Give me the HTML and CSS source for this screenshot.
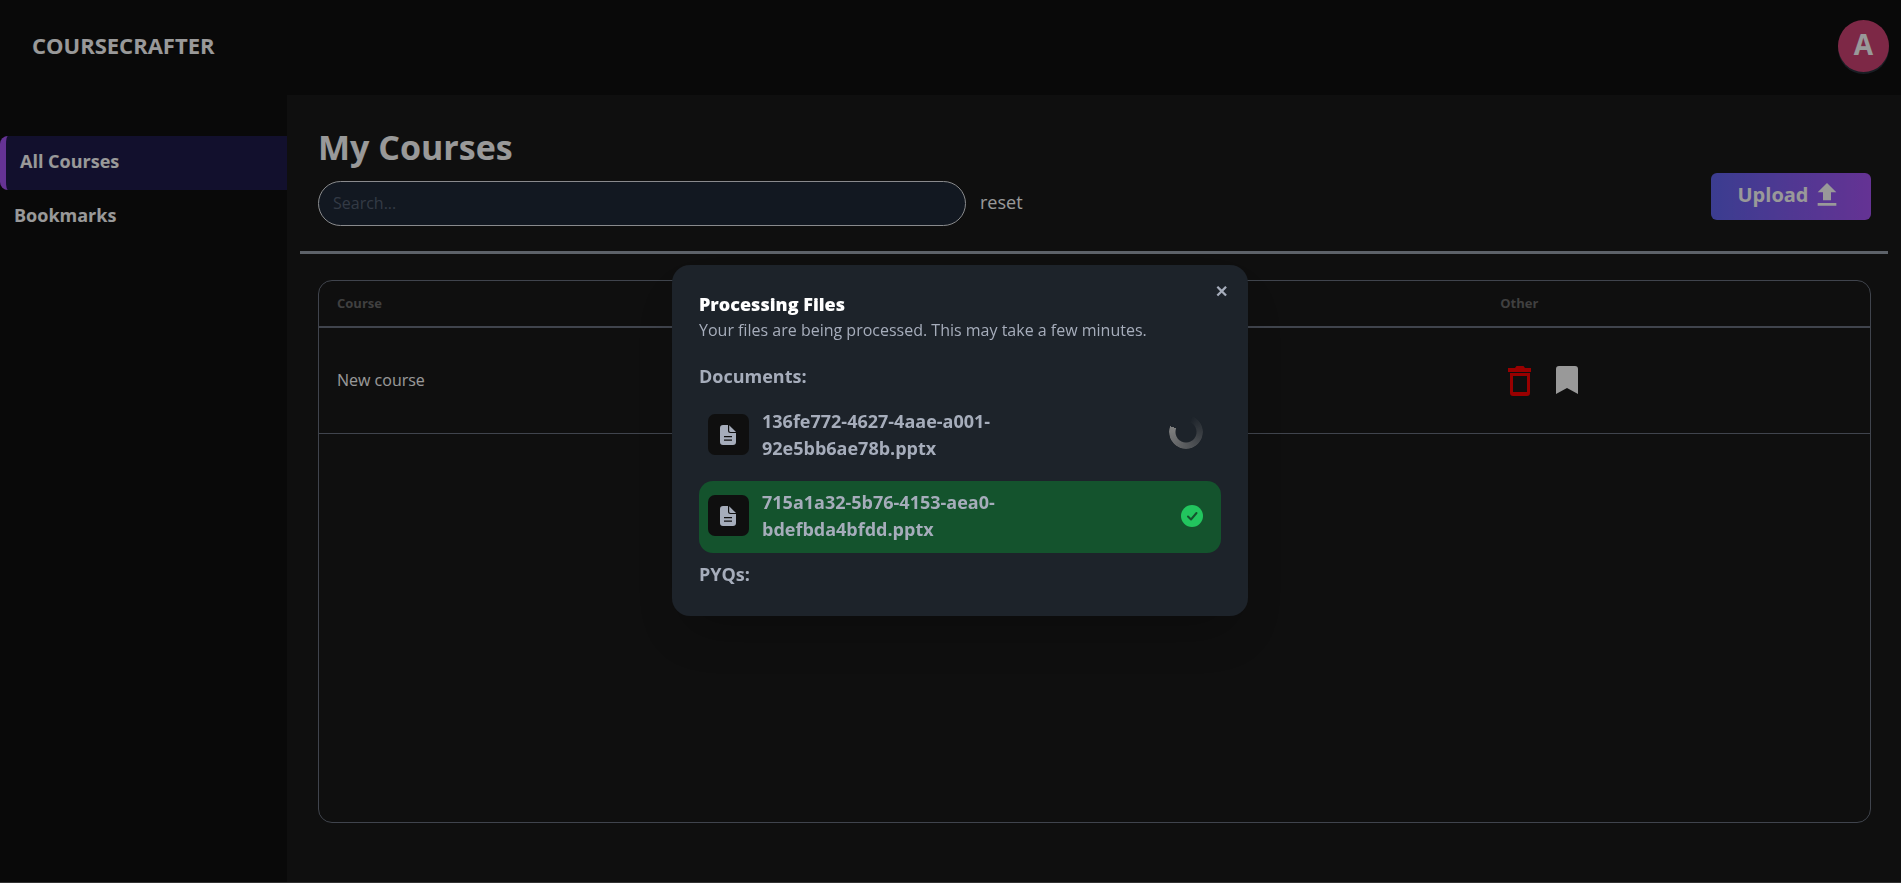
FILE: index.html
```html
<!DOCTYPE html>
<html lang="en">
<head>
<meta charset="utf-8">
<meta name="viewport" content="width=device-width, initial-scale=1">
<title>CourseCrafter</title>
<link rel="stylesheet" href="styles.css">
</head>
<body>
<div class="app">
  <header class="topbar">
    <span class="brand">COURSECRAFTER</span>
    <button class="avatar" type="button" aria-label="Account">A</button>
  </header>
  <div class="layout">
    <nav class="sidebar">
      <a class="nav-item nav-item-active" href="#courses">All Courses</a>
      <a class="nav-item" href="#bookmarks">Bookmarks</a>
    </nav>
    <main class="content">
      <div class="toolbar">
        <div class="toolbar-main">
          <h1 class="page-title">My Courses</h1>
          <form class="search">
            <input class="search-input" type="search" placeholder="Search..." aria-label="Search courses">
            <button class="reset" type="reset">reset</button>
          </form>
        </div>
        <button class="upload" type="button">Upload
          <svg class="upload-icon" viewBox="0 0 24 24" aria-hidden="true"><path d="M9 16h6v-6h4l-7-7-7 7h4v6zm-4 2h14v2H5v-2z"/></svg>
        </button>
      </div>
      <div class="table-card">
        <table class="courses">
          <thead><tr><th class="col-course">Course</th><th>Other</th></tr></thead>
          <tbody>
            <tr>
              <td>New course</td>
              <td>
                <div class="actions">
                  <button class="icon-button delete" type="button" aria-label="Delete course"><svg viewBox="0 0 36 36" aria-hidden="true"><path fill-rule="evenodd" d="M6 5h7l1.500-2h7L23 5h6v4H6zM8 10h20v20q0 3-3 3H11q-3 0-3-3zm3 3v16h14V13z"/></svg></button>
                  <button class="icon-button" type="button" aria-label="Bookmark course"><svg viewBox="0 0 36 36" aria-hidden="true"><path d="M9 3h16q3 0 3 3v25l-11-6-11 6V6q0-3 3-3z"/></svg></button>
                </div>
              </td>
            </tr>
          </tbody>
        </table>
      </div>
    </main>
  </div>
</div>

<div class="overlay">
  <section class="modal" role="dialog" aria-modal="true" aria-labelledby="modal-title">
    <button class="close" type="button" aria-label="Close">✕</button>
    <h2 class="modal-title" id="modal-title">Processing Files</h2>
    <p class="modal-text">Your files are being processed. This may take a few minutes.</p>
    <h3 class="group-title">Documents:</h3>
    <ul class="files">
      <li class="file">
        <span class="file-icon"><svg viewBox="0 0 24 24" aria-hidden="true"><path fill-rule="evenodd" d="M7 2h5v5.500q0 2.500 2.500 2.500H20v9q0 3-3 3H7q-3 0-3-3V5q0-3 3-3zm1 11v1.300h8V13zm0 3.500v1.300h8v-1.300z"/><path d="M13.200 2.300L20 9h-5.300q-1.500 0-1.500-1.500z"/></svg></span>
        <span class="file-name">136fe772-4627-4aae-a001-92e5bb6ae78b.pptx</span>
        <span class="spinner" role="status" aria-label="Processing"></span>
      </li>
      <li class="file file-done">
        <span class="file-icon"><svg viewBox="0 0 24 24" aria-hidden="true"><path fill-rule="evenodd" d="M7 2h5v5.500q0 2.500 2.500 2.500H20v9q0 3-3 3H7q-3 0-3-3V5q0-3 3-3zm1 11v1.300h8V13zm0 3.500v1.300h8v-1.300z"/><path d="M13.200 2.300L20 9h-5.300q-1.500 0-1.500-1.500z"/></svg></span>
        <span class="file-name">715a1a32-5b76-4153-aea0-bdefbda4bfdd.pptx</span>
        <svg class="check" viewBox="0 0 22 22" role="img" aria-label="Done"><circle cx="11" cy="11" r="11"/><path d="M7 11.500l3 3 5.500-6.500"/></svg>
      </li>
    </ul>
    <h3 class="group-title group-last">PYQs:</h3>
  </section>
</div>
</body>
</html>
```
FILE: styles.css
```css
* { box-sizing: border-box; }

body {
  margin: 0;
  background: #191919;
  color: #fff;
  font: 16px/24px "Open Sans", sans-serif;
}

h1, h2, h3, p, ul { margin: 0; padding: 0; }
ul { list-style: none; }
button { border: 0; padding: 0; background: none; color: inherit; font: inherit; cursor: pointer; }
svg { display: block; fill: currentColor; }

.app {
  display: flex;
  flex-direction: column;
  min-height: 100vh;
  border-bottom: 1px solid #333;
}

.topbar {
  display: flex;
  align-items: center;
  justify-content: space-between;
  height: 95px;
  padding: 0 12px 4px 32px;
  background: #0f0f0f;
}
.brand { padding-bottom: 2px; font-size: 22px; line-height: 30px; font-weight: 700; }
.avatar {
  width: 51px;
  height: 52px;
  padding-bottom: 3px;
  border-radius: 50%;
  background: #d04375;
  box-shadow: 0 2px #2a323c;
  font-size: 28px;
  font-weight: 700;
}

.layout { display: flex; flex: 1; }
.sidebar { width: 287px; padding-top: 41px; background: #0f0f0f; }
.nav-item {
  display: block;
  padding: 13px 14px 17px;
  color: inherit;
  font-size: 18px;
  font-weight: 700;
  text-decoration: none;
}
.nav-item-active {
  border-left: 6px solid #a855f7;
  border-radius: 8px 0 0 8px;
  background: #1e1b4b;
}

.content { display: flex; flex: 1; flex-direction: column; padding: 28px 13px 59px; }
.toolbar {
  display: flex;
  align-items: flex-end;
  justify-content: space-between;
  padding: 0 17px 25px 18px;
  border-bottom: 3px solid #9ca3af;
}
.toolbar-main { flex: 1; }
.page-title { font-size: 34px; line-height: 48px; font-weight: 700; }
.search { display: flex; align-items: center; gap: 14px; margin-top: 10px; }
.search-input {
  width: 648px;
  height: 45px;
  padding: 0 14px 2px;
  border: 1px solid #e5e7eb;
  border-radius: 23px;
  background: #1f2937;
  color: inherit;
  font: inherit;
}
.search-input::placeholder { color: #566174; opacity: 1; }
.reset { padding-bottom: 3px; font-size: 18px; }
.upload {
  display: flex;
  align-items: center;
  justify-content: center;
  gap: 2px;
  width: 160px;
  height: 47px;
  margin-bottom: 6px;
  padding: 0 2px 3px 0;
  border-radius: 6px;
  background: linear-gradient(to right, #6366f1, #a855f7);
  font-size: 20px;
  font-weight: 700;
}
.upload-icon { width: 32px; height: 32px; }

.table-card {
  flex: 1;
  margin: 26px 17px 0 18px;
  border: 1px solid #6b7280;
  border-radius: 14px;
}
.courses { width: 100%; border-collapse: collapse; table-layout: fixed; }
.courses th, .courses td { padding: 0 18px; text-align: left; }
.courses th { height: 46px; padding-bottom: 2px; border-bottom: 2px solid #6b7280; color: #6b6b6b; font-size: 13px; font-weight: 700; }
.courses td { height: 106px; border-bottom: 1px solid #6b7280; }
.col-course { width: 75%; }
.actions { display: flex; gap: 12px; padding: 2px 0 0 2px; }
.icon-button { width: 36px; height: 36px; }
.delete { color: #ff0000; }

.overlay {
  position: fixed;
  inset: 0 0 1px 0;
  display: flex;
  align-items: center;
  justify-content: center;
  padding: 0 0 2px 19px;
  background: rgba(0, 0, 0, 0.4);
}
.modal {
  position: relative;
  width: 576px;
  padding: 26px 27px 28px;
  border-radius: 18px;
  background: #1d232a;
  color: #a6adbb;
  box-shadow: 0 25px 50px -12px rgba(0, 0, 0, 0.25);
}
.close {
  position: absolute;
  top: 8px;
  right: 9px;
  width: 36px;
  height: 36px;
  font-size: 16px;
  font-weight: 600;
}
.modal-title { color: #fff; font-size: 18px; line-height: 27px; font-weight: 800; }
.modal-text { line-height: 24px; }
.group-title { margin: 21px 0 10px; font-size: 18px; line-height: 27px; font-weight: 700; }
.group-last { margin: 8px 0 0; }
.files { display: grid; gap: 9px; }
.file {
  display: flex;
  align-items: center;
  min-height: 72px;
  padding: 8px 18px 10px 9px;
  border-radius: 14px;
}
.file-done { background: #14532d; }
.file-icon {
  display: grid;
  place-items: center;
  width: 41px;
  height: 41px;
  padding-right: 1px;
  border-radius: 7px;
  background: #0f0f0f;
}
.file-icon svg { width: 24px; height: 24px; }
.file-name { width: 260px; margin-left: 13px; font-size: 18px; line-height: 27px; font-weight: 700; }
.spinner {
  width: 34px;
  height: 34px;
  margin: 0 0 6px auto;
  border-radius: 50%;
  background: conic-gradient(from 20deg, #80808000, #808080 75%, #80808000 75%);
  mask: radial-gradient(circle, transparent 10px, #000 11px);
}
.check { width: 22px; height: 22px; margin-left: auto; fill: #22c55e; }
.check path { fill: none; stroke: #14532d; stroke-width: 2; stroke-linecap: round; stroke-linejoin: round; }
```
